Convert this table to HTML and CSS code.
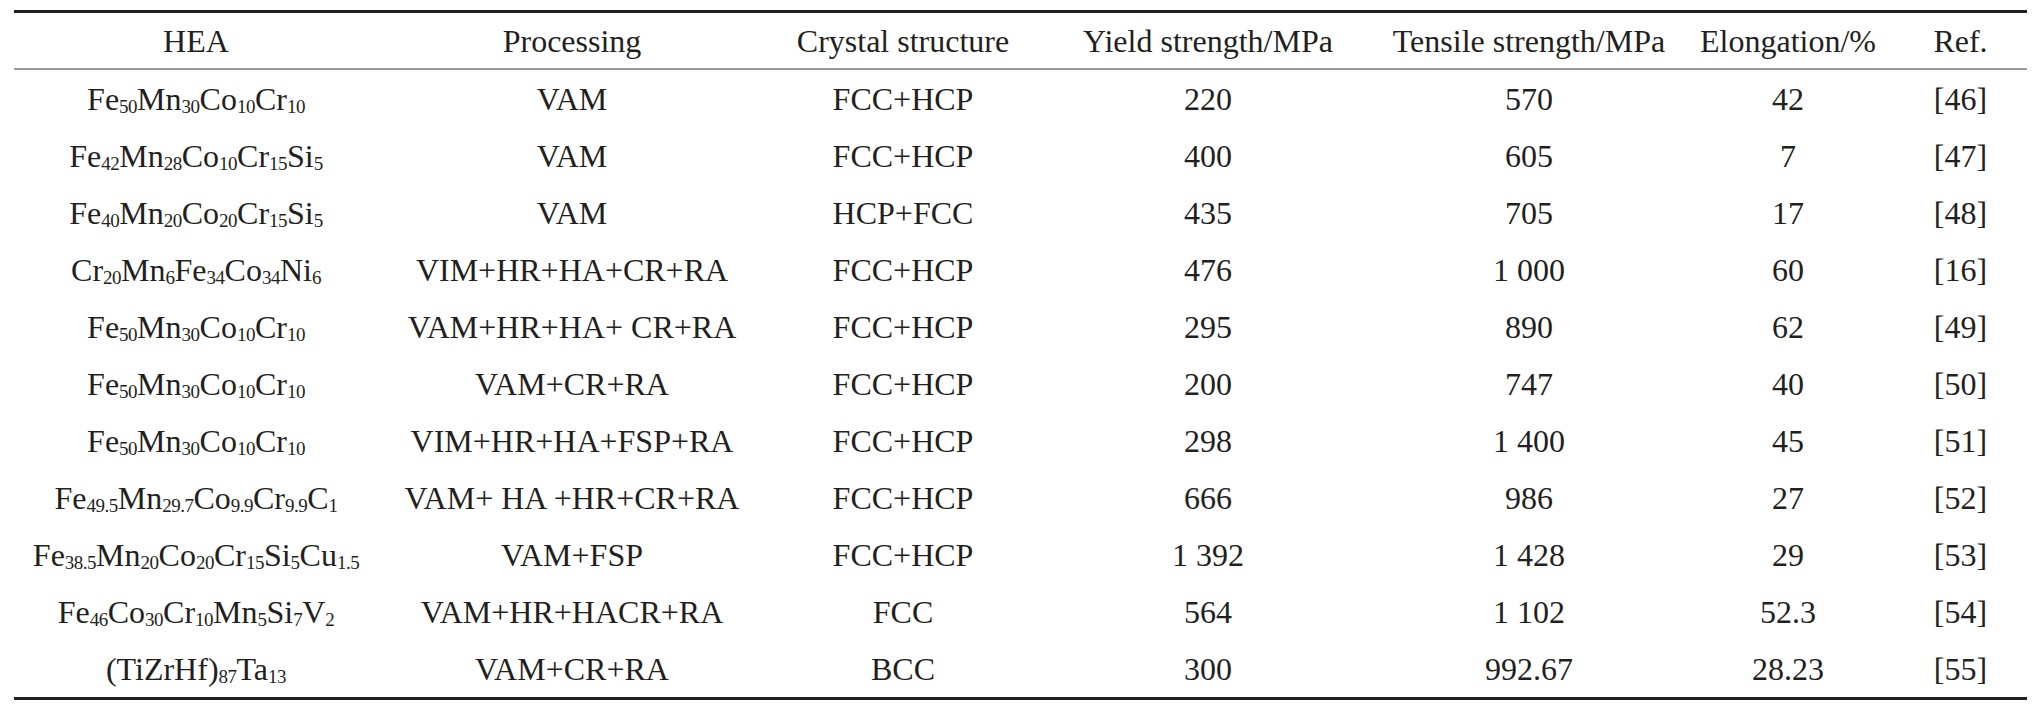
FILE: index.html
```html
<!DOCTYPE html>
<html lang="en">
<head>
<meta charset="utf-8">
<title>Mechanical properties of TRIP high-entropy alloys</title>
<link rel="stylesheet" href="styles.css">
</head>
<body>
<div class="caption-wrap">
  <p class="caption">Table 2&ensp;Mechanical properties of TRIP high-entropy alloys</p>
</div>
<table class="props">
  <colgroup>
    <col class="c-hea">
    <col class="c-proc">
    <col class="c-cryst">
    <col class="c-yield">
    <col class="c-tens">
    <col class="c-elong">
    <col class="c-ref">
  </colgroup>
  <thead>
    <tr>
      <th>HEA</th>
      <th>Processing</th>
      <th>Crystal structure</th>
      <th>Yield strength/MPa</th>
      <th>Tensile strength/MPa</th>
      <th>Elongation/%</th>
      <th>Ref.</th>
    </tr>
  </thead>
  <tbody>
    <tr>
      <td>Fe<sub>50</sub>Mn<sub>30</sub>Co<sub>10</sub>Cr<sub>10</sub></td>
      <td>VAM</td><td>FCC+HCP</td><td>220</td><td>570</td><td>42</td><td>[46]</td>
    </tr>
    <tr>
      <td>Fe<sub>42</sub>Mn<sub>28</sub>Co<sub>10</sub>Cr<sub>15</sub>Si<sub>5</sub></td>
      <td>VAM</td><td>FCC+HCP</td><td>400</td><td>605</td><td>7</td><td>[47]</td>
    </tr>
    <tr>
      <td>Fe<sub>40</sub>Mn<sub>20</sub>Co<sub>20</sub>Cr<sub>15</sub>Si<sub>5</sub></td>
      <td>VAM</td><td>HCP+FCC</td><td>435</td><td>705</td><td>17</td><td>[48]</td>
    </tr>
    <tr>
      <td>Cr<sub>20</sub>Mn<sub>6</sub>Fe<sub>34</sub>Co<sub>34</sub>Ni<sub>6</sub></td>
      <td>VIM+HR+HA+CR+RA</td><td>FCC+HCP</td><td>476</td><td>1 000</td><td>60</td><td>[16]</td>
    </tr>
    <tr>
      <td>Fe<sub>50</sub>Mn<sub>30</sub>Co<sub>10</sub>Cr<sub>10</sub></td>
      <td>VAM+HR+HA+ CR+RA</td><td>FCC+HCP</td><td>295</td><td>890</td><td>62</td><td>[49]</td>
    </tr>
    <tr>
      <td>Fe<sub>50</sub>Mn<sub>30</sub>Co<sub>10</sub>Cr<sub>10</sub></td>
      <td>VAM+CR+RA</td><td>FCC+HCP</td><td>200</td><td>747</td><td>40</td><td>[50]</td>
    </tr>
    <tr>
      <td>Fe<sub>50</sub>Mn<sub>30</sub>Co<sub>10</sub>Cr<sub>10</sub></td>
      <td>VIM+HR+HA+FSP+RA</td><td>FCC+HCP</td><td>298</td><td>1 400</td><td>45</td><td>[51]</td>
    </tr>
    <tr>
      <td>Fe<sub>49.5</sub>Mn<sub>29.7</sub>Co<sub>9.9</sub>Cr<sub>9.9</sub>C<sub>1</sub></td>
      <td>VAM+ HA +HR+CR+RA</td><td>FCC+HCP</td><td>666</td><td>986</td><td>27</td><td>[52]</td>
    </tr>
    <tr>
      <td>Fe<sub>38.5</sub>Mn<sub>20</sub>Co<sub>20</sub>Cr<sub>15</sub>Si<sub>5</sub>Cu<sub>1.5</sub></td>
      <td>VAM+FSP</td><td>FCC+HCP</td><td>1 392</td><td>1 428</td><td>29</td><td>[53]</td>
    </tr>
    <tr>
      <td>Fe<sub>46</sub>Co<sub>30</sub>Cr<sub>10</sub>Mn<sub>5</sub>Si<sub>7</sub>V<sub>2</sub></td>
      <td>VAM+HR+HACR+RA</td><td>FCC</td><td>564</td><td>1 102</td><td>52.3</td><td>[54]</td>
    </tr>
    <tr>
      <td>(TiZrHf)<sub>87</sub>Ta<sub>13</sub></td>
      <td>VAM+CR+RA</td><td>BCC</td><td>300</td><td>992.67</td><td>28.23</td><td>[55]</td>
    </tr>
  </tbody>
</table>
</body>
</html>
```
FILE: styles.css
```css
html,
body {
  margin: 0;
  padding: 0;
  background: #ffffff;
}

body {
  font-family: "Liberation Serif", "Times New Roman", serif;
  color: #231f20;
}

.caption-wrap {
  height: 10px;
  overflow: hidden;
}

.caption {
  margin: -42px 0 0;
  font-size: 36px;
  line-height: 36px;
  font-weight: bold;
  text-align: center;
  white-space: nowrap;
}

.props {
  margin-left: 14px;
  width: 2013px;
  border-collapse: collapse;
  table-layout: fixed;
  border-top: 3px solid #231f20;
  border-bottom: 3px solid #231f20;
  font-size: 32px;
}

.c-hea { width: 364px; }
.c-proc { width: 388px; }
.c-cryst { width: 274px; }
.c-yield { width: 336px; }
.c-tens { width: 306px; }
.c-elong { width: 212px; }
.c-ref { width: 133px; }

.props th,
.props td {
  padding: 0;
  text-align: center;
  vertical-align: middle;
  white-space: nowrap;
  font-weight: normal;
  line-height: 36px;
}

.props thead th {
  height: 55px;
  border-bottom: 2px solid #9a9a9a;
}

.props tbody td {
  height: 57px;
}

.props sub {
  font-size: 19px;
  line-height: 0;
  vertical-align: -3px;
  letter-spacing: -0.5px;
}
```
